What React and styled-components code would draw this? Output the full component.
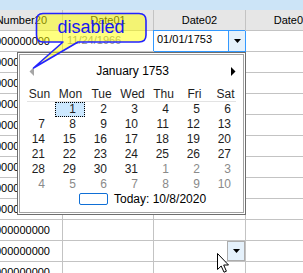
import React from "react";
import styled, { createGlobalStyle } from "styled-components";

const GlobalStyle = createGlobalStyle`
  html, body { margin: 0; padding: 0; background: #fff; overflow: hidden; }
  body { font-family: "Liberation Sans", Arial, sans-serif; }
  * { box-sizing: border-box; }
`;

const Screen = styled.div`
  position: relative;
  width: 303px;
  height: 273px;
  overflow: hidden;
  background: #fff;
  display: flex;
  flex-direction: column;
`;

const TopBand = styled.div`
  flex: none;
  height: 10px;
  background: #cce4f7;
`;

const Grid = styled.div`
  display: grid;
  grid-template-columns: 63px 91px 92px 92px;
  grid-auto-rows: 21px;
  font-size: 11px;
  color: #000;
`;

const HeadCell = styled.div`
  background: #e6e6e6;
  border-right: 1px solid #c3c3c3;
  border-bottom: 1px solid #c3c3c3;
  display: flex;
  align-items: center;
  justify-content: ${(p) => (p.$end ? "flex-end" : "center")};
  padding-right: ${(p) => (p.$end ? "15px" : "0")};
  white-space: nowrap;
  overflow: hidden;
`;

const Cell = styled.div`
  border-right: 1px solid #c3c3c3;
  border-bottom: 1px solid #c3c3c3;
  display: flex;
  align-items: center;
  justify-content: ${(p) => (p.$end ? "flex-end" : "flex-start")};
  padding: ${(p) => (p.$end ? "0 12px 1px 0" : "0 0 2px 4px")};
  color: ${(p) => (p.$disabled ? "#8c8c8c" : "#000")};
  white-space: nowrap;
  overflow: hidden;
`;

const ButtonCell = styled.div`
  border-right: 1px solid #c3c3c3;
  border-bottom: 1px solid #c3c3c3;
  display: flex;
  justify-content: flex-end;
`;

const EditorCell = styled.div`
  border-right: 1px solid #3399ff;
  border-bottom: 1px solid #3399ff;
  box-shadow: -1px -1px 0 0 #3399ff;
  display: flex;
  align-items: stretch;
  background: #fff;
`;

const EditorText = styled.div`
  flex: 1;
  display: flex;
  align-items: center;
  padding: 0 0 4px 3px;
  white-space: nowrap;
`;

const DropButton = styled.div`
  flex: none;
  width: ${(p) => (p.$hover ? "18px" : "17px")};
  background: #e5f1fb;
  border-left: 1px solid ${(p) => (p.$hover ? "#adadad" : "#3399ff")};
  ${(p) => (p.$hover ? "border: 1px solid #adadad; border-right-width: 1px;" : "")}
  display: flex;
  align-items: center;
  justify-content: center;
`;

const Popup = styled.div`
  position: absolute;
  left: 17px;
  top: 52px;
  width: 229px;
  height: 163px;
  background: #fff;
  border: 1px solid #6e6e6e;
  box-shadow: inset 0 0 0 1px #fff, inset 0 0 0 2px #a3a3a3;
  padding: 7px 6px 0 6px;
  display: flex;
  flex-direction: column;
  font-size: 12px;
  color: #1e1e1e;
`;

const TitleRow = styled.div`
  height: 22px;
  display: flex;
  align-items: center;
  justify-content: space-between;
  padding: 0 3px 0 5px;
  color: #000;
`;

const Title = styled.div`
  white-space: nowrap;
`;

const DayNames = styled.div`
  margin-top: 5px;
  height: 14px;
  display: grid;
  grid-template-columns: repeat(7, 31px);
  align-items: center;
`;

const DayName = styled.div`
  text-align: center;
  line-height: 14px;
`;

const Divider = styled.div`
  height: 1px;
  margin: 0 3px 0 3px;
  background: #e3e3e3;
`;

const Days = styled.div`
  display: grid;
  grid-template-columns: repeat(7, 31px);
  grid-auto-rows: 15px;
`;

const Day = styled.div`
  display: flex;
  align-items: center;
  justify-content: flex-end;
  padding-right: ${(p) => (p.$selected ? "8px" : "10px")};
  margin-right: ${(p) => (p.$selected ? "1px" : "0")};
  color: ${(p) => (p.$other ? "#8a8a8a" : "#1e1e1e")};
  background: ${(p) => (p.$selected ? "#cce8ff" : "transparent")};
  border: ${(p) => (p.$selected ? "1px dotted #000" : "none")};
  line-height: 13px;
`;

const TodayRow = styled.div`
  height: 14px;
  margin-left: 55px;
  display: flex;
  align-items: center;
  gap: 6px;
  color: #000;
`;

const TodayBox = styled.div`
  width: 29px;
  height: 12px;
  border: 1px solid #0f6fd6;
  border-radius: 2px;
`;

const TooltipLayer = styled.div`
  position: absolute;
  left: 0;
  top: 0;
  width: 160px;
  height: 75px;
  pointer-events: none;
`;

const TooltipLabel = styled.div`
  position: absolute;
  left: 36px;
  top: 13px;
  width: 110px;
  height: 29px;
  display: flex;
  align-items: center;
  justify-content: center;
  font-size: 18px;
  color: #1717f2;
  white-space: nowrap;
`;

const CursorLayer = styled.svg`
  position: absolute;
  left: 216px;
  top: 252px;
  pointer-events: none;
`;

const DownArrow = () => (
  <svg width="7" height="4" viewBox="0 0 7 4">
    <path d="M0 0 H7 L3.5 4 Z" fill="#000" />
  </svg>
);

const SideArrow = ({ dir, color }) => (
  <svg width="5" height="9" viewBox="0 0 5 9">
    {dir === "left" ? (
      <path d="M5 0 V9 L0.5 4.5 Z" fill={color} />
    ) : (
      <path d="M0 0 V9 L4.5 4.5 Z" fill={color} />
    )}
  </svg>
);

const dayNames = ["Sun", "Mon", "Tue", "Wed", "Thu", "Fri", "Sat"];

const weeks = [
  [null, 1, 2, 3, 4, 5, 6],
  [7, 8, 9, 10, 11, 12, 13],
  [14, 15, 16, 17, 18, 19, 20],
  [21, 22, 23, 24, 25, 26, 27],
  [28, 29, 30, 31, "n1", "n2", "n3"],
  ["n4", "n5", "n6", "n7", "n8", "n9", "n10"],
];

const ROWS = 12;

export default function App() {
  const rows = [];
  for (let i = 0; i < ROWS; i++) {
    const first = i === 0;
    const hover = i === 10;
    rows.push(
      <React.Fragment key={i}>
        <Cell $end>0000000000</Cell>
        {first ? <Cell $disabled>11/24/1966</Cell> : <Cell />}
        {first ? (
          <EditorCell>
            <EditorText>01/01/1753</EditorText>
            <DropButton>
              <DownArrow />
            </DropButton>
          </EditorCell>
        ) : hover ? (
          <ButtonCell>
            <DropButton $hover>
              <DownArrow />
            </DropButton>
          </ButtonCell>
        ) : (
          <Cell />
        )}
        <Cell />
      </React.Fragment>
    );
  }

  return (
    <>
      <GlobalStyle />
      <Screen>
        <TopBand />
        <Grid>
          <HeadCell $end>Number20</HeadCell>
          <HeadCell>Date01</HeadCell>
          <HeadCell>Date02</HeadCell>
          <HeadCell>Date03</HeadCell>
          {rows}
        </Grid>

        <Popup>
          <TitleRow>
            <SideArrow dir="left" color="#a6a6a6" />
            <Title>January 1753</Title>
            <SideArrow dir="right" color="#000" />
          </TitleRow>
          <DayNames>
            {dayNames.map((d) => (
              <DayName key={d}>{d}</DayName>
            ))}
          </DayNames>
          <Divider />
          <Days>
            {weeks.flat().map((d, idx) => {
              if (d === null) return <Day key={idx} />;
              const other = typeof d === "string";
              const label = other ? d.slice(1) : d;
              return (
                <Day key={idx} $other={other} $selected={d === 1}>
                  {label}
                </Day>
              );
            })}
          </Days>
          <TodayRow>
            <TodayBox />
            <span>Today: 10/8/2020</span>
          </TodayRow>
        </Popup>

        <TooltipLayer>
          <svg width="160" height="75" viewBox="0 0 160 75">
            <path
              d="M43 13.5 H139 Q146 13.5 146 20.5 V35 Q146 42 139 42 H78 L33.5 68 L63 42 H43 Q36.5 42 36.5 35 V20.5 Q36.5 13.5 43 13.5 Z"
              fill="rgba(255,255,0,0.5)"
              stroke="#2323ff"
              strokeWidth="1.6"
              strokeLinejoin="round"
            />
          </svg>
          <TooltipLabel>disabled</TooltipLabel>
        </TooltipLayer>

        <CursorLayer width="14" height="22" viewBox="0 0 14 22">
          <path
            d="M1.5 1.5 V17.5 L5.2 14 L8 20.2 L10.4 19.2 L7.7 13 H12.5 Z"
            fill="#fff"
            stroke="#000"
            strokeWidth="1"
            strokeLinejoin="miter"
          />
        </CursorLayer>
      </Screen>
    </>
  );
}
